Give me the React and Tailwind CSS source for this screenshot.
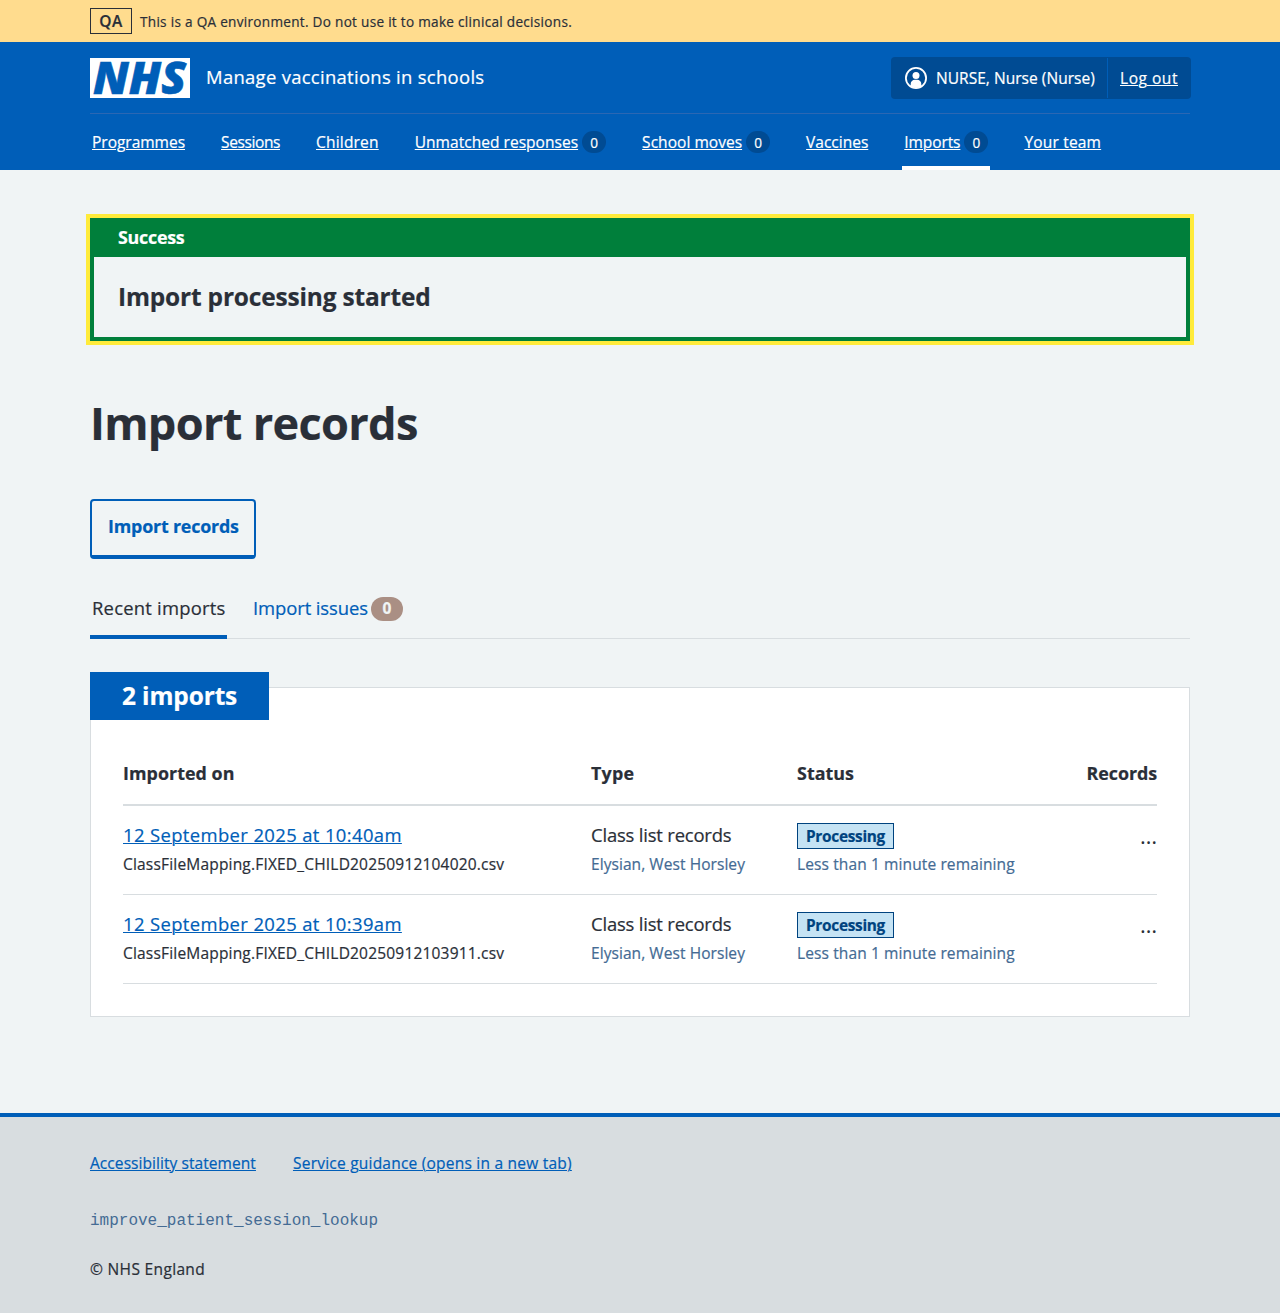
import React from "react";

const navItems = [
  { label: "Programmes", spacing: "tracking-[-0.02px]" },
  { label: "Sessions", spacing: "tracking-[-0.4px]" },
  { label: "Children", spacing: "tracking-[0.19px]" },
  { label: "Unmatched responses", spacing: "tracking-[0.03px]", count: 0 },
  { label: "School moves", spacing: "tracking-[0.03px]", count: 0 },
  { label: "Vaccines", spacing: "tracking-[-0.01px]" },
  { label: "Imports", spacing: "tracking-[-0.1px]", count: 0, current: true },
  { label: "Your team", spacing: "tracking-[0.18px]" },
];

const imports = [
  { date: "12 September 2025 at 10:40am", file: "ClassFileMapping.FIXED_CHILD20250912104020.csv" },
  { date: "12 September 2025 at 10:39am", file: "ClassFileMapping.FIXED_CHILD20250912103911.csv" },
];

const columns = "grid grid-cols-[468px_206px_206px_154px]";
const link = "underline decoration-1 underline-offset-[1px] [text-decoration-skip-ink:auto]";

function Logo() {
  return (
    <svg className="block h-10 w-[100px] shrink-0 overflow-visible" viewBox="0 0 100 40" role="img" aria-label="NHS">
      <rect width="100" height="40" fill="#fff" />
      <text
        x="3"
        y="36"
        textLength="93"
        lengthAdjust="spacingAndGlyphs"
        fill="#005eb8"
        stroke="#005eb8"
        strokeWidth="0.6"
        fontFamily="'Open Sans', 'Noto Sans', sans-serif"
        fontSize="45"
        fontWeight="800"
        fontStyle="italic"
      >
        NHS
      </text>
    </svg>
  );
}

function UserIcon() {
  return (
    <svg className="block size-[22px] shrink-0" viewBox="0 0 22 22" aria-hidden="true">
      <circle cx="11" cy="11" r="10.1" fill="none" stroke="#fff" strokeWidth="1.8" />
      <circle cx="11" cy="8.4" r="3.5" fill="#fff" />
      <path d="M5.7 19.2V17a4.2 4.2 0 0 1 4.2-4.2h2.2a4.2 4.2 0 0 1 4.2 4.2v2.2A10 10 0 0 1 11 21a10 10 0 0 1-5.3-1.8Z" fill="#fff" />
    </svg>
  );
}

function Header() {
  return (
    <header className="h-32 bg-[#005eb8] text-white">
      <div className="mx-auto w-[1100px]">
        <div className="flex h-18 items-center border-b border-[#2b67b3]">
          <Logo />
          <span className="ml-4 pb-px text-[18.43px] tracking-[0.31px]">Manage vaccinations in schools</span>
          <div className="-mr-px ml-auto flex h-[42px] w-[300px] rounded-[4px] bg-[#004b93] py-px text-[15.52px]">
            <div className="flex w-[217px] items-center gap-[9px] border-r border-[#005eb8] pl-[14px]">
              <UserIcon />
              <span className="pt-0.5 tracking-[0.03px] whitespace-nowrap">NURSE, Nurse (Nurse)</span>
            </div>
            <a className="flex items-center pt-0.5 pl-3">
              <span className={`${link} tracking-[0.53px]`}>Log out</span>
            </a>
          </div>
        </div>
        <nav className="flex h-14 gap-8 text-[15.52px]">
          {navItems.map((item) => (
            <a
              key={item.label}
              className={`flex items-center whitespace-nowrap border-y-4 border-t-transparent px-0.5 ${item.current ? "border-b-white" : "border-b-transparent"}`}
            >
              <span className={`${link} pt-0.5 ${item.spacing}`}>{item.label}</span>
              {item.count !== undefined && (
                <span className="ml-1 flex h-[22px] w-6 items-center justify-center rounded-full bg-[#004b93] pt-0.5 text-[13.58px]">
                  {item.count}
                </span>
              )}
            </a>
          ))}
        </nav>
      </div>
    </header>
  );
}

function ImportsCard() {
  return (
    <section className="mt-12 h-[330px] border border-[#d8dde0] bg-white px-8">
      <h2 className="-mt-4 -ml-[33px] flex h-12 w-[179px] items-center bg-[#005eb8] pt-px pl-8 text-[24.44px] font-bold tracking-[-0.12px] text-white">
        2 imports
      </h2>
      <div className={`${columns} mt-[38px] h-12 border-b-2 border-[#d8dde0] text-[17.86px] leading-[30px] font-bold`}>
        <span className="tracking-[0.05px]">Imported on</span>
        <span className="tracking-[0.2px]">Type</span>
        <span className="tracking-[0.05px]">Status</span>
        <span className="text-right tracking-[-0.06px]">Records</span>
      </div>
      {imports.map((row) => (
        <div key={row.date} className={`${columns} h-[89px] border-b border-[#d8dde0] pt-[14px] text-[18.43px] leading-[30px]`}>
          <div>
            <a className={`${link} block w-fit tracking-[0.38px] text-[#005eb8]`}>{row.date}</a>
            <div className="text-[15.52px] leading-7 tracking-[0.18px]">{row.file}</div>
          </div>
          <div>
            <div className="tracking-[-0.18px]">Class list records</div>
            <div className="text-[15.52px] leading-7 tracking-[0.06px] text-[#446b94]">Elysian, West Horsley</div>
          </div>
          <div>
            <div className="h-[30px] pt-[3px]">
              <strong className="flex h-[26px] w-[97px] items-center border border-[#00437f] bg-[#c5e3f4] pt-0.5 pl-2 text-[15.4px] leading-6 font-bold tracking-[-0.3px] text-[#00437f]">
                Processing
              </strong>
            </div>
            <div className="text-[15.52px] leading-7 whitespace-nowrap tracking-[0.11px] text-[#446b94]">
              Less than 1 minute remaining
            </div>
          </div>
          <div className="text-right text-[22px] [-webkit-text-stroke:0]">…</div>
        </div>
      ))}
    </section>
  );
}

export default function App() {
  return (
    <div className="flex min-h-[1313px] flex-col bg-[#f0f4f5] font-['Open_Sans','Noto_Sans',sans-serif] text-[#2a2f38] [-webkit-text-stroke:0.2px_currentColor]">
      <div className="h-[42px] bg-[#ffdc8e]">
        <div className="mx-auto flex h-full w-[1100px] items-center gap-2">
          <strong className="flex h-[26px] w-[42px] items-center justify-center border border-[#2a2f38] pt-px text-[15.52px] font-semibold tracking-[0.4px]">
            QA
          </strong>
          <span className="pt-0.5 text-[13.58px] tracking-[0.29px]">
            This is a QA environment. Do not use it to make clinical decisions.
          </span>
        </div>
      </div>
      <Header />
      <main className="mx-auto w-[1100px] flex-1 pt-12">
        <div className="h-[123px] border-4 border-[#007f3b] shadow-[0_0_0_4px_#ffeb3b]">
          <h2 className="flex h-[35px] items-center bg-[#007f3b] pb-1 pl-6 text-[17.86px] font-bold tracking-[-0.26px] text-white">
            Success
          </h2>
          <p className="flex h-20 items-center pl-6 text-[24.44px] font-bold tracking-[-0.16px]">Import processing started</p>
        </div>
        <h1 className="mt-[53px] text-[45.12px] leading-[58px] font-bold tracking-[-0.68px]">Import records</h1>
        <button className="mt-[47px] flex h-[60px] w-[166px] items-center rounded-[4px] border-2 border-b-4 border-[#005eb8] pb-[3px] pl-4 text-[17.86px] font-bold whitespace-nowrap tracking-[-0.2px] text-[#005eb8]">
          Import records
        </button>
        <div className="mt-[19px] flex h-[61px] gap-6 border-b border-[#d8dde0] text-[18.43px]">
          <a className="flex h-[61px] w-[137px] items-center border-b-4 border-[#005eb8] pt-0.5 pl-0.5 whitespace-nowrap tracking-[0.22px]">
            Recent imports
          </a>
          <a className="flex h-[61px] items-center border-b-4 border-transparent pt-[3px] pl-0.5 whitespace-nowrap text-[#005eb8]">
            <span className="tracking-[-0.09px]">Import issues</span>
            <span className="mt-0.5 ml-[3px] flex h-6 w-8 items-center justify-center rounded-full bg-[#aa8f84] text-[15.52px] font-bold text-[#f0f4f5]">
              0
            </span>
          </a>
        </div>
        <ImportsCard />
      </main>
      <footer className="h-[200px] border-t-4 border-[#005eb8] bg-[#d8dde0]">
        <div className="mx-auto w-[1100px] pt-8 text-[15.52px] leading-7">
          <div className="flex gap-[37px] text-[#005eb8]">
            <a className={`${link} tracking-[0.06px]`}>Accessibility statement</a>
            <a className={`${link} tracking-[0.22px]`}>Service guidance (opens in a new tab)</a>
          </div>
          <p className="mt-[30px] font-['Liberation_Mono',monospace] text-[16px] text-[#446b94] [-webkit-text-stroke:0]">improve_patient_session_lookup</p>
          <p className="mt-[20px] tracking-[0.33px]">© NHS England</p>
        </div>
      </footer>
    </div>
  );
}
